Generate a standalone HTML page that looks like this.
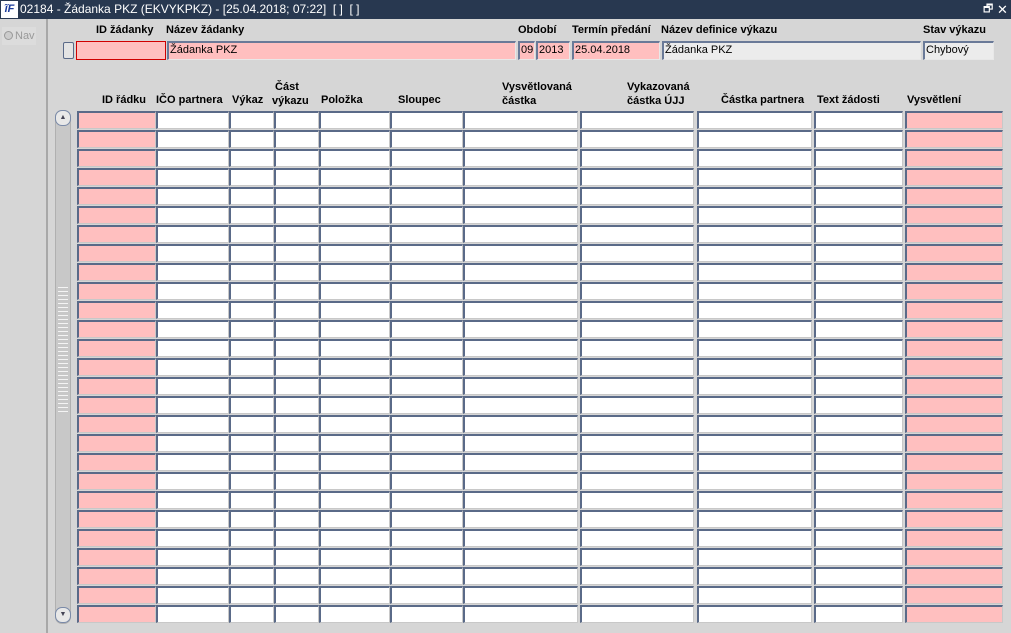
<!DOCTYPE html><html><head><meta charset="utf-8"><style>
*{margin:0;padding:0;box-sizing:border-box}
body{width:1011px;height:633px;background:#d6d6d6;font-family:"Liberation Sans",Arial,sans-serif;font-size:11px;position:relative;overflow:hidden}
.a{position:absolute}
.t{background:#283850;color:#fff;left:0;top:0;width:1011px;height:19px;font-size:12px;line-height:19px}
.lbl{position:absolute;font-weight:bold;font-size:11px;color:#000;white-space:nowrap}
.c{position:absolute;height:18px;background:#fff;border-top:2px solid #5a6a88;border-left:2px solid #5a6a88;border-bottom:1px solid #c8c8c8;border-right:1px solid #c8c8c8}
.p{background:#ffbfbf}
.f{position:absolute;height:19px;border-top:2px solid #6a7a98;border-left:2px solid #6a7a98;border-bottom:1px solid #e8e8e8;border-right:1px solid #e8e8e8;font-size:11px;line-height:15px;padding-left:1px}
</style></head><body>
<div class="a t"><span style="position:absolute;left:1px;top:1px;width:17px;height:17px;background:#fff;color:#1a3a9a;font-weight:bold;font-style:italic;font-size:11px;line-height:17px;text-align:center">ĩF</span><span style="position:absolute;left:20px">02184 - Žádanka PKZ (EKVYKPKZ) - [25.04.2018; 07:22]&nbsp; [ ]&nbsp; [ ]</span><span style="position:absolute;left:983px;font-size:11px">🗗</span><span style="position:absolute;left:997px;font-size:13px">✕</span></div>
<div class="a" style="left:0;top:19px;width:48px;height:614px;border-right:2px solid #a8a8a8"></div>
<div class="a" style="left:2px;top:27px;width:34px;height:18px;background:#dcdcdc;color:#999;line-height:18px"><span style="display:inline-block;width:9px;height:9px;border-radius:50%;border:1px solid #999;background:#ccc;margin:0 2px 0 2px;vertical-align:-1px"></span>Nav</div>

<div class="lbl" style="left:96px;top:24px">ID žádanky</div>
<div class="lbl" style="left:166px;top:24px">Název žádanky</div>
<div class="lbl" style="left:518px;top:24px">Období</div>
<div class="lbl" style="left:572px;top:24px">Termín předání</div>
<div class="lbl" style="left:661px;top:24px">Název definice výkazu</div>
<div class="lbl" style="left:923px;top:24px">Stav výkazu</div>

<div class="a" style="left:63px;top:42px;width:11px;height:17px;border:1px solid #5a6a88;border-radius:2px;background:#e4e4e4"></div>
<div class="f p" style="left:76px;top:41px;width:90px;border:1px solid #d00000"></div>
<div class="f p" style="left:167px;top:41px;width:349px">Žádanka PKZ</div>
<div class="f p" style="left:518px;top:41px;width:17px">09</div>
<div class="f p" style="left:536px;top:41px;width:34px">2013</div>
<div class="f p" style="left:572px;top:41px;width:88px">25.04.2018</div>
<div class="f" style="left:662px;top:41px;width:259px;background:#ececec">Žádanka PKZ</div>
<div class="f" style="left:923px;top:41px;width:71px;background:#ececec">Chybový</div>

<div class="lbl" style="left:102px;top:94px">ID řádku</div>
<div class="lbl" style="left:156px;top:94px">IČO partnera</div>
<div class="lbl" style="left:232px;top:94px">Výkaz</div>
<div class="lbl" style="left:272px;top:80px;line-height:14px">&nbsp;Část<br>výkazu</div>
<div class="lbl" style="left:321px;top:94px">Položka</div>
<div class="lbl" style="left:398px;top:94px">Sloupec</div>
<div class="lbl" style="left:502px;top:80px;line-height:14px">Vysvětlovaná<br>částka</div>
<div class="lbl" style="left:627px;top:80px;line-height:14px">Vykazovaná<br>částka ÚJJ</div>
<div class="lbl" style="left:721px;top:94px">Částka partnera</div>
<div class="lbl" style="left:817px;top:94px">Text žádosti</div>
<div class="lbl" style="left:907px;top:94px">Vysvětlení</div>

<div class="a" style="left:55px;top:110px;width:16px;height:514px;background:#c8c8c8;border:1px solid #b0b0b0;border-radius:7px"></div>
<div class="a" style="left:55px;top:110px;width:16px;height:16px;background:#e8e8e8;border:1px solid #7a8aa8;border-radius:7px;font-size:7px;text-align:center;line-height:14px;color:#445">▲</div>
<div class="a" style="left:55px;top:607px;width:16px;height:16px;background:#e8e8e8;border:1px solid #7a8aa8;border-radius:7px;font-size:7px;text-align:center;line-height:14px;color:#445">▼</div>
<div class="a" style="left:58px;top:285px;width:10px;height:130px;background:repeating-linear-gradient(#c8c8c8 0 2px,#f4f4f4 2px 3px,#c8c8c8 3px 4px)"></div>

<div id="g"></div>
<script>
var cols=[[77,79,1],[156,73,0],[229,45,0],[274,45,0],[319,71,0],[390,73,0],[463,115,0],[580,114,0],[697,115,0],[814,89,0],[905,98,1]];
var h='';
for(var r=0;r<27;r++){var y=111+r*19;for(var i=0;i<cols.length;i++){var c=cols[i];h+='<div class="c'+(c[2]?' p':'')+'" style="left:'+c[0]+'px;top:'+y+'px;width:'+c[1]+'px"></div>';}}
document.getElementById('g').innerHTML=h;
</script>
</body></html>
